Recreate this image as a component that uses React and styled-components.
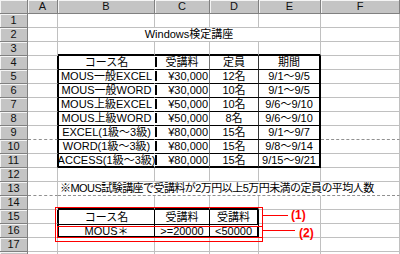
import React from 'react';
import styled, { createGlobalStyle } from 'styled-components';

const GlobalStyle = createGlobalStyle`
  html, body {
    margin: 0;
    padding: 0;
    background: #fff;
  }
  body {
    font-family: "Liberation Sans", "Noto Sans CJK JP", sans-serif;
  }
`;

const GRID = '#c0c0c0';
const thick = '2px solid #000';
const thin = '1px solid #000';
const dotted = '1px dashed #909090';

const Sheet = styled.div`
  position: relative;
  width: 400px;
  height: 254px;
  overflow: hidden;
  display: grid;
  grid-template-columns: 28px 30px 97px 55px 49px 62px 1fr;
  grid-auto-rows: 14px;
  font-size: 11px;
  color: #000;
  background: #fff;
`;

const Head = styled.div`
  background: #c4c4c4;
  border-right: 1px solid #808080;
  border-bottom: 1px solid #808080;
  box-shadow: inset 1px 1px 0 #f4f4f4;
  display: flex;
  align-items: center;
  justify-content: center;
  line-height: 13px;
  color: #111;
`;

const Cell = styled.div`
  grid-column: span ${(p) => p.$span || 1};
  display: flex;
  align-items: center;
  justify-content: ${(p) =>
    p.$align === 'left' ? 'flex-start' : p.$align === 'right' ? 'flex-end' : 'center'};
  padding: 0 ${(p) => (p.$align === 'left' ? '2px' : '1px')};
  white-space: nowrap;
  min-width: 0;
  line-height: 13px;
  letter-spacing: ${(p) => (p.$tight ? '-0.55px' : 'normal')};
  border-top: ${(p) => p.$t || 'none'};
  border-left: ${(p) => p.$l || 'none'};
  border-right: ${(p) => p.$r || `1px solid ${GRID}`};
  border-bottom: ${(p) => p.$b || `1px solid ${GRID}`};
  background: ${(p) =>
    p.$dash ? 'linear-gradient(#000, #000) left 0 top 1px / 2px 10px no-repeat' : 'transparent'};
`;

const Frame = styled.div`
  position: absolute;
  left: ${(p) => p.$x}px;
  top: ${(p) => p.$y}px;
  width: ${(p) => p.$w}px;
  height: ${(p) => p.$h}px;
  box-sizing: border-box;
  border: 1px solid #f00;
`;

const Callout = styled.div`
  position: absolute;
  left: ${(p) => p.$x}px;
  top: ${(p) => p.$y}px;
  height: 14px;
  display: flex;
  align-items: flex-start;
`;

const Leader = styled.span`
  width: ${(p) => p.$len}px;
  height: 1px;
  margin-top: ${(p) => p.$drop}px;
  margin-right: ${(p) => p.$gap}px;
  background: #f00;
`;

const Tag = styled.span`
  font-size: 12px;
  line-height: 14px;
  font-weight: bold;
  color: #f00;
`;

const COLS = ['A', 'B', 'C', 'D', 'E', 'F'];
const ROWS = 18;
const LAST_LABEL = 17;

const contents = {
  2: { B: { text: 'Windows検定講座', span: 4 } },
  13: {
    B: {
      text: '※MOUS試験講座で受講料が2万円以上5万円未満の定員の平均人数',
      span: 5,
      align: 'left',
      tight: true,
    },
  },
};

const courses = [
  ['コース名', '受講料', '定員', '期間'],
  ['MOUS一般EXCEL', '¥30,000', '12名', '9/1～9/5'],
  ['MOUS一般WORD', '¥30,000', '10名', '9/1～9/5'],
  ['MOUS上級EXCEL', '¥50,000', '10名', '9/6～9/10'],
  ['MOUS上級WORD', '¥50,000', '8名', '9/6～9/10'],
  ['EXCEL(1級～3級)', '¥80,000', '15名', '9/1～9/7'],
  ['WORD(1級～3級)', '¥80,000', '15名', '9/8～9/14'],
  ['ACCESS(1級～3級)', '¥80,000', '15名', '9/15～9/21'],
];

courses.forEach((row, i) => {
  const r = 4 + i;
  contents[r] = {};
  row.forEach((text, j) => {
    contents[r]['BCDE'[j]] = { text, align: i > 0 && j === 1 ? 'right' : 'center' };
  });
});

const criteria = [
  ['コース名', '受講料', '受講料'],
  ['MOUS＊', '>=20000', '<50000'],
];

criteria.forEach((row, i) => {
  const r = 15 + i;
  contents[r] = {};
  row.forEach((text, j) => {
    contents[r]['BCD'[j]] = { text };
  });
});

// borders of cell (r, c), Excel style: each cell owns its right and bottom line
function edges(r, c) {
  const e = {};
  const inT1 = r >= 4 && r <= 11 && 'BCDE'.includes(c);
  const inT2 = r >= 15 && r <= 16 && 'BCD'.includes(c);

  if (r === 3 && 'BCDE'.includes(c)) e.$b = thick;
  if (r === 14 && 'BCD'.includes(c)) e.$b = thick;
  if (c === 'A' && ((r >= 4 && r <= 11) || r === 15 || r === 16)) e.$r = thin;

  if (inT1) {
    e.$b = r === 11 ? thick : thin;
    if (c === 'B') {
      e.$l = thin;
      e.$r = '1px solid transparent';
    }
    if (c === 'C') {
      e.$dash = true;
      e.$r = '1px solid #777';
    }
    if (c === 'D') e.$r = '1px solid #333';
    if (c === 'E') e.$r = thick;
  }

  if (inT2) {
    if (r === 15) e.$b = 'none';
    else {
      e.$t = '3px double #000';
      e.$b = thick;
    }
    if (c === 'B') e.$l = thin;
    e.$r = c === 'D' ? thick : thin;
  }

  if (r === 9 && (c === 'A' || c === 'F')) e.$b = dotted;
  if (r === 13) e.$b = dotted;
  return e;
}

function SheetRow({ r }) {
  const cells = [];
  const data = contents[r] || {};
  for (let i = 0; i < COLS.length; i++) {
    const c = COLS[i];
    const item = data[c];
    const span = item && item.span ? item.span : 1;
    cells.push(
      <Cell
        key={c}
        $span={span}
        $align={item && item.align}
        $tight={item && item.tight}
        {...edges(r, c)}
      >
        {item ? item.text : null}
      </Cell>
    );
    i += span - 1;
  }
  return (
    <>
      <Head>{r <= LAST_LABEL ? r : null}</Head>
      {cells}
    </>
  );
}

export default function App() {
  const rows = [];
  for (let r = 1; r <= ROWS; r++) rows.push(<SheetRow key={r} r={r} />);

  return (
    <>
      <GlobalStyle />
      <Sheet>
        <Head />
        {COLS.map((c) => (
          <Head key={c}>{c}</Head>
        ))}
        {rows}

        <Frame $x={55} $y={207} $w={208} $h={35} />
        <Frame $x={57} $y={226} $w={206} $h={12} />
        <Callout $x={263} $y={208}>
          <Leader $len={25} $drop={7} $gap={3} />
          <Tag>(1)</Tag>
        </Callout>
        <Callout $x={263} $y={226}>
          <Leader $len={32} $drop={4} $gap={4} />
          <Tag>(2)</Tag>
        </Callout>
      </Sheet>
    </>
  );
}
